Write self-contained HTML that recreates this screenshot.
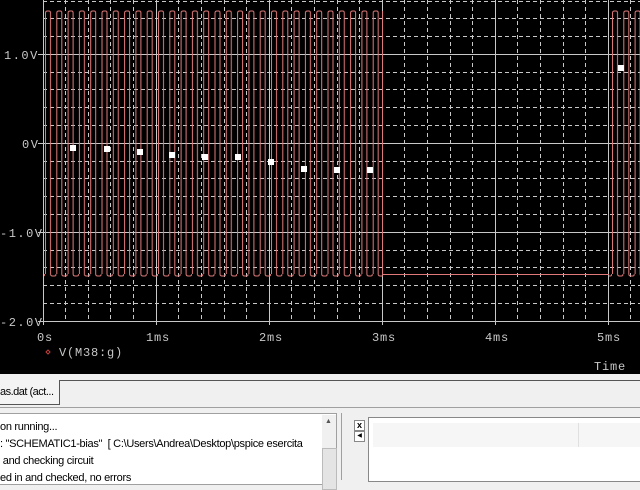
<!DOCTYPE html>
<html><head><style>
body{margin:0;width:640px;height:480px;overflow:hidden;background:#f0f0f0;position:relative;font-family:"Liberation Sans",sans-serif}
.t{position:absolute;left:0;font-size:11px;color:#000;white-space:nowrap;letter-spacing:-0.3px}
</style></head><body>
<svg width="640" height="375" style="position:absolute;left:0;top:0" xmlns="http://www.w3.org/2000/svg">
<defs>
<pattern id="sq" x="45" y="0" width="11.3" height="375" patternUnits="userSpaceOnUse">
<path d="M0.5 274 V13 Q0.5 11 2.5 11 H4 Q5.5 11 5.5 13 V274 Q5.5 276 7.5 276 H9.5 Q11 276 11 274" fill="none" stroke="#e07a7a" stroke-width="1"/>
</pattern>
<pattern id="sq2" x="612" y="0" width="11.3" height="375" patternUnits="userSpaceOnUse">
<path d="M0.5 274 V13 Q0.5 11 2.5 11 H4 Q5.5 11 5.5 13 V274 Q5.5 276 7.5 276 H9.5 Q11 276 11 274" fill="none" stroke="#e07a7a" stroke-width="1"/>
</pattern>
</defs>
<rect width="640" height="375" fill="#000"/>
<g stroke="#c8c8c8" stroke-width="1" stroke-dasharray="4,3">
<path d="M65.5 0V321M88.5 0V321M110.5 0V321M133.5 0V321M178.5 0V321M201.5 0V321M224.5 0V321M246.5 0V321M291.5 0V321M314.5 0V321M337.5 0V321M359.5 0V321M404.5 0V321M427.5 0V321M450.5 0V321M472.5 0V321M517.5 0V321M540.5 0V321M563.5 0V321M585.5 0V321M630.5 0V321"/>
<path d="M43 1.5H640M43 18.5H640M43 36.5H640M43 72.5H640M43 89.5H640M43 107.5H640M43 125.5H640M43 161.5H640M43 178.5H640M43 196.5H640M43 214.5H640M43 250.5H640M43 267.5H640M43 285.5H640M43 303.5H640"/>
</g>
<g stroke="#c8c8c8" stroke-width="1">
<path d="M43.5 0V325M156.5 0V325M269.5 0V325M382.5 0V325M495.5 0V325M608.5 0V325"/>
<path d="M38 54.5H640M38 143.5H640M38 232.5H640M38 321.5H640"/>
</g>
<rect x="44" y="0" width="339" height="300" fill="url(#sq)"/>
<path d="M382.5 11V274.5H608.5V274" fill="none" stroke="#e07a7a"/>
<rect x="609" y="0" width="31" height="300" fill="url(#sq2)"/>
<g fill="#fff">
<rect x="70" y="145" width="6" height="6"/><rect x="104" y="146" width="6" height="6"/><rect x="137" y="149" width="6" height="6"/><rect x="169" y="152" width="6" height="6"/><rect x="202" y="154" width="6" height="6"/><rect x="235" y="154" width="6" height="6"/><rect x="268" y="159" width="6" height="6"/><rect x="301" y="166" width="6" height="6"/><rect x="334" y="167" width="6" height="6"/><rect x="367" y="167" width="6" height="6"/><rect x="618" y="65" width="6" height="6"/>
</g>
<g fill="#c8c8c8" font-family="Liberation Mono,monospace" font-size="12" letter-spacing="1.5">
<text x="4" y="59">1.0V</text><text x="22" y="148">0V</text><text x="0" y="237">-1.0V</text><text x="0" y="326">-2.0V</text>
</g>
<g fill="#c8c8c8" font-family="Liberation Mono,monospace" font-size="12" letter-spacing="0.8">
<text x="37" y="341">0s</text><text x="146" y="341">1ms</text><text x="259" y="341">2ms</text><text x="372" y="341">3ms</text><text x="485" y="341">4ms</text><text x="597" y="341">5ms</text>
<text x="59" y="356">V(M38:g)</text><text x="594" y="370">Time</text>
</g>
<path d="M48 350l2 2-2 2-2-2z" fill="none" stroke="#c04040"/>
</svg>
<div style="position:absolute;left:0;top:374px;width:640px;height:106px;background:#f0f0f0"></div>
<div style="position:absolute;left:60px;top:380px;width:580px;height:1px;background:#555"></div>
<div style="position:absolute;left:0;top:380px;width:59px;height:24px;border-right:1px solid #555;border-bottom:1px solid #555;background:#f4f4f4;font-size:11px;line-height:24px;letter-spacing:-0.5px">as.dat (act...</div>
<div style="position:absolute;left:0;top:407px;width:640px;height:1px;background:#a0a0a0"></div>
<div style="position:absolute;left:0;top:413px;width:336px;height:70px;background:#fff;border:1px solid #a0a0a0;border-left:none"></div>
<div style="position:absolute;left:322px;top:415px;width:14px;height:70px;background:#f0f0f0"></div>
<div style="position:absolute;left:322px;top:448px;width:13px;height:40px;background:#e4e4e4;border:1px solid #bbb"></div>
<div style="position:absolute;left:325px;top:418px;font-size:7px;color:#555">▲</div>
<div class="t" style="top:421px">on running...</div>
<div class="t" style="top:438px">: "SCHEMATIC1-bias"&nbsp; [ C:\Users\Andrea\Desktop\pspice esercita</div>
<div class="t" style="top:455px">&nbsp;and checking circuit</div>
<div class="t" style="top:472px">ed in and checked, no errors</div>
<div style="position:absolute;left:341px;top:413px;width:1px;height:67px;background:#a0a0a0"></div>
<div style="position:absolute;left:354px;top:420px;width:9px;height:9px;border:1px solid #888;background:#fff;font-size:9px;line-height:9px;text-align:center;font-weight:bold">x</div>
<div style="position:absolute;left:354px;top:431px;width:9px;height:9px;border:1px solid #888;background:#fff;font-size:6px;line-height:9px;text-align:center">◀</div>
<div style="position:absolute;left:368px;top:417px;width:272px;height:63px;background:#fff;border:1px solid #888"></div>
<div style="position:absolute;left:373px;top:423px;width:267px;height:24px;background:#f6f6f6"></div>
<div style="position:absolute;left:578px;top:423px;width:1px;height:24px;background:#e0e0e0"></div>
</body></html>
